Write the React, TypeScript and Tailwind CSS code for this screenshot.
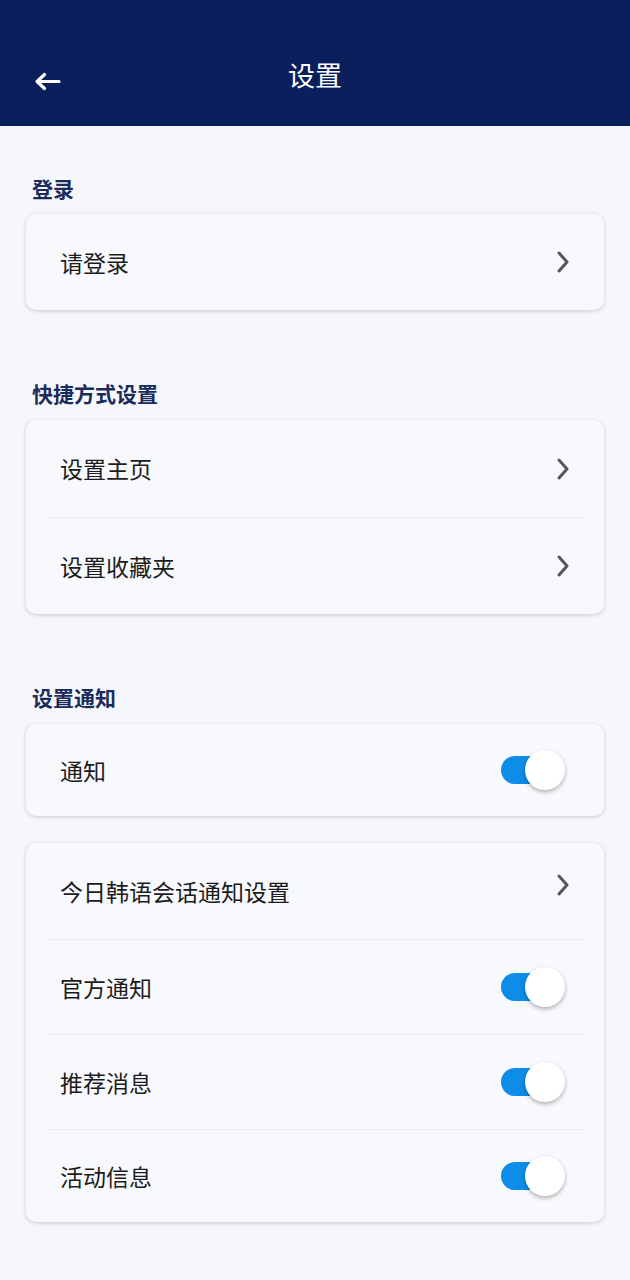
import React from "react";

const font = { fontFamily: '"Noto Sans CJK SC", "Noto Sans", sans-serif' };

function Chevron({ up = false }: { up?: boolean }) {
  return (
    <svg width="14" height="24" viewBox="0 0 14 24" className={up ? "-translate-y-[6px]" : ""}>
      <polyline points="3,3 11,12 3,21" fill="none" stroke="#555555" strokeWidth="3" strokeLinecap="round" strokeLinejoin="round" />
    </svg>
  );
}

function Toggle() {
  return (
    <div className="relative w-[64px] h-[42px] flex items-center">
      <div className="w-[58px] h-[28px] rounded-full bg-[#0d8de8]" />
      <div className="absolute right-0 top-[1px] w-[40px] h-[40px] rounded-full bg-white shadow-[0_2px_4px_rgba(0,0,0,0.3)]" />
    </div>
  );
}

function Row({ label, right, h, up }: { label: string; right: "chev" | "toggle"; h: string; up?: boolean }) {
  return (
    <div className={`flex items-center justify-between pl-[34px] ${right === "chev" ? "pr-[34px]" : "pr-[39px]"} ${h}`}>
      <span className="text-[23px] text-[#1c1c1c]">{label}</span>
      {right === "chev" ? <Chevron up={up} /> : <Toggle />}
    </div>
  );
}

function Divider() {
  return <div className="mx-[20px] h-px bg-[#eceef2]" />;
}

function Card({ children, className = "" }: { children: React.ReactNode; className?: string }) {
  return (
    <div className={`rounded-[10px] bg-[#f8f9fc] shadow-[0_1px_4px_rgba(0,0,0,0.18)] ${className}`}>{children}</div>
  );
}

function SectionTitle({ text, className = "" }: { text: string; className?: string }) {
  return (
    <div className={`h-[24px] flex items-center pl-[6px] text-[21px] font-bold text-[#1a2b5c] leading-none ${className}`}>
      {text}
    </div>
  );
}

export default function App() {
  return (
    <div className="w-[630px] min-h-[1280px] bg-[#f6f7fb]" style={font}>
      <div className="h-[126px] bg-[#0a1f5b] relative flex items-end">
        <div className="w-full h-[80px] flex items-center justify-center relative">
          <div className="absolute left-[34px] top-[26px]">
            <svg width="27" height="19" viewBox="0 0 27 19">
              <path d="M25 9.5 H3.5 M10.5 2.5 L3 9.5 L10.5 16.5" fill="none" stroke="#ffffff" strokeWidth="3.2" strokeLinecap="round" strokeLinejoin="round" />
            </svg>
          </div>
          <span className="text-white text-[27px] leading-none -translate-y-[12px]">设置</span>
        </div>
      </div>

      <div className="px-[26px]">
        <SectionTitle text="登录" className="mt-[50px]" />
        <Card className="mt-[14px]">
          <Row label="请登录" right="chev" h="h-[96px]" />
        </Card>

        <SectionTitle text="快捷方式设置" className="mt-[71px]" />
        <Card className="mt-[15px]">
          <Row label="设置主页" right="chev" h="h-[97px]" />
          <Divider />
          <Row label="设置收藏夹" right="chev" h="h-[96px]" />
        </Card>

        <SectionTitle text="设置通知" className="mt-[71px]" />
        <Card className="mt-[15px]">
          <Row label="通知" right="toggle" h="h-[92px]" />
        </Card>

        <Card className="mt-[27px]">
          <Row label="今日韩语会话通知设置" right="chev" h="h-[96px]" up />
          <Divider />
          <Row label="官方通知" right="toggle" h="h-[94px]" />
          <Divider />
          <Row label="推荐消息" right="toggle" h="h-[94px]" />
          <Divider />
          <Row label="活动信息" right="toggle" h="h-[92px]" />
        </Card>
      </div>
    </div>
  );
}
